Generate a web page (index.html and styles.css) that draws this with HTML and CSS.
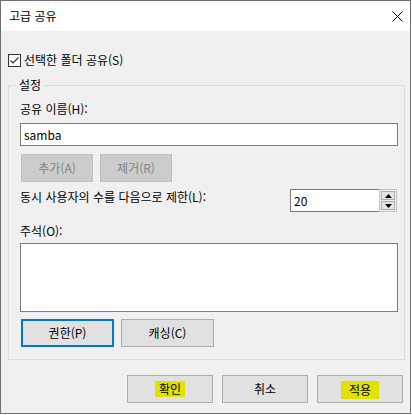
FILE: index.html
```html
<!DOCTYPE html>
<html lang="ko">
<head>
<meta charset="utf-8">
<title>고급 공유</title>
<link rel="stylesheet" href="styles.css">
</head>
<body>
<div class="window">
  <div class="titlebar">
    <span class="title">고급 공유</span>
    <svg class="close" width="11" height="11" viewBox="0 0 11 11"><path d="M0.5 0.5 L10.5 10.5 M10.5 0.5 L0.5 10.5" stroke="#000" stroke-width="1" fill="none"/></svg>
  </div>
  <div class="content">
    <div class="check-row">
      <svg class="checkbox" width="13" height="13" viewBox="0 0 13 13"><rect x="0.5" y="0.5" width="12" height="12" fill="#fff" stroke="#333"/><path d="M2.5 6.5 L5 9 L10.5 3.5" stroke="#333" stroke-width="1.2" fill="none"/></svg>
      <span class="check-label">선택한 폴더 공유(S)</span>
    </div>
    <fieldset class="group">
      <legend class="legend">설정</legend>
      <div class="label">공유 이름(H):</div>
      <div class="textbox">samba</div>
      <div class="btn-row row-add">
        <div class="btn disabled">추가(A)</div>
        <div class="btn disabled">제거(R)</div>
      </div>
      <div class="limit-row">
        <span class="label">동시 사용자의 수를 다음으로 제한(L):</span>
        <div class="spin">
          <div class="spin-text">20</div>
          <div class="spin-btns">
            <div class="spin-btn"><svg width="7" height="4" viewBox="0 0 7 4"><path d="M3.5 0 L7 4 L0 4 Z" fill="#000"/></svg></div>
            <div class="spin-btn"><svg width="7" height="4" viewBox="0 0 7 4"><path d="M0 0 L7 0 L3.5 4 Z" fill="#000"/></svg></div>
          </div>
        </div>
      </div>
      <div class="label comment-label">주석(O):</div>
      <div class="textarea"></div>
      <div class="btn-row row-perm">
        <div class="btn wide focused">권한(P)</div>
        <div class="btn wide">캐싱(C)</div>
      </div>
    </fieldset>
    <div class="dialog-buttons">
      <div class="btn dlg"><span class="hl hl-ok">확인</span></div>
      <div class="btn dlg">취소</div>
      <div class="btn dlg"><span class="hl hl-apply">적용</span></div>
    </div>
  </div>
</div>
</body>
</html>
```
FILE: styles.css
```css
* { box-sizing: border-box; }
html, body { margin: 0; padding: 0; background: #fff; }
body {
  font-family: "Noto Sans CJK KR", "Noto Sans", sans-serif;
  font-size: 12px;
  line-height: 16px;
  color: #000;
}
.window {
  width: 411px;
  height: 414px;
  border: 1px solid #707070;
  background: #f0f0f0;
  display: flex;
  flex-direction: column;
}
.titlebar {
  height: 30px;
  background: #fff;
  display: flex;
  align-items: center;
  justify-content: space-between;
  padding: 0 7px 0 8px;
  flex: none;
}
.title { font-size: 12px; line-height: 16px; }
.close { display: block; }
.content {
  padding: 21px 5px 0 7px;
}
.check-row {
  display: flex;
  align-items: center;
  height: 16px;
  gap: 3px;
}
.checkbox { display: block; flex: none; }
.group {
  margin: 9px 0 0 0;
  padding: 8px 6px 12px 11px;
  border: 1px solid #dcdcdc;
  min-width: 0;
}
.legend {
  padding: 0 3px;
  margin-left: -4px;
  line-height: 16px;
}
.label { line-height: 16px; }
.textbox {
  margin-top: 6px;
  height: 23px;
  border: 1px solid #7a7a7a;
  background: #fff;
  padding: 2px 3px;
  line-height: 17px;
}
.btn-row {
  display: flex;
  gap: 7px;
  margin-left: 1px;
}
.row-add { margin-top: 8px; }
.row-perm { margin-top: 7px; }
.btn {
  height: 28px;
  width: 72px;
  border: 1px solid #adadad;
  background: #e1e1e1;
  display: flex;
  align-items: center;
  justify-content: center;
  line-height: 16px;
}
.btn.disabled {
  background: #cccccc;
  border-color: #bfbfbf;
  color: #838383;
}
.btn.wide { width: 93px; }
.btn.focused { border: 2px solid #0078d7; }
.limit-row {
  margin-top: 7px;
  display: flex;
  justify-content: space-between;
  align-items: flex-start;
  padding-right: 1px;
}
.spin {
  display: flex;
  height: 23px;
  width: 107px;
}
.spin-text {
  flex: 1;
  border: 1px solid #7a7a7a;
  border-right: none;
  background: #fff;
  padding: 2px 3px;
  line-height: 17px;
}
.spin-btns {
  width: 18px;
  border: 1px solid #c4c4c4;
  background: #f0f0f0;
  padding: 1px;
  display: flex;
  flex-direction: column;
  gap: 1px;
}
.spin-btn {
  flex: 1;
  border: 1px solid #adadad;
  background: #e5e5e5;
  display: flex;
  align-items: center;
  justify-content: center;
}
.spin-btn svg { display: block; }
.comment-label { margin-top: 11px; }
.textarea {
  margin-top: 4px;
  height: 69px;
  border: 1px solid #7a7a7a;
  background: #fff;
}
.dialog-buttons {
  margin-top: 15px;
  display: flex;
  justify-content: flex-end;
  gap: 9px;
  padding-right: 2px;
}
.btn.dlg { width: 86px; }
.hl { background: #e2e200; }
.hl-ok { padding: 0 4px; }
.hl-apply { padding: 1px 8px 1px 8px; position: relative; top: 1px; }
```
